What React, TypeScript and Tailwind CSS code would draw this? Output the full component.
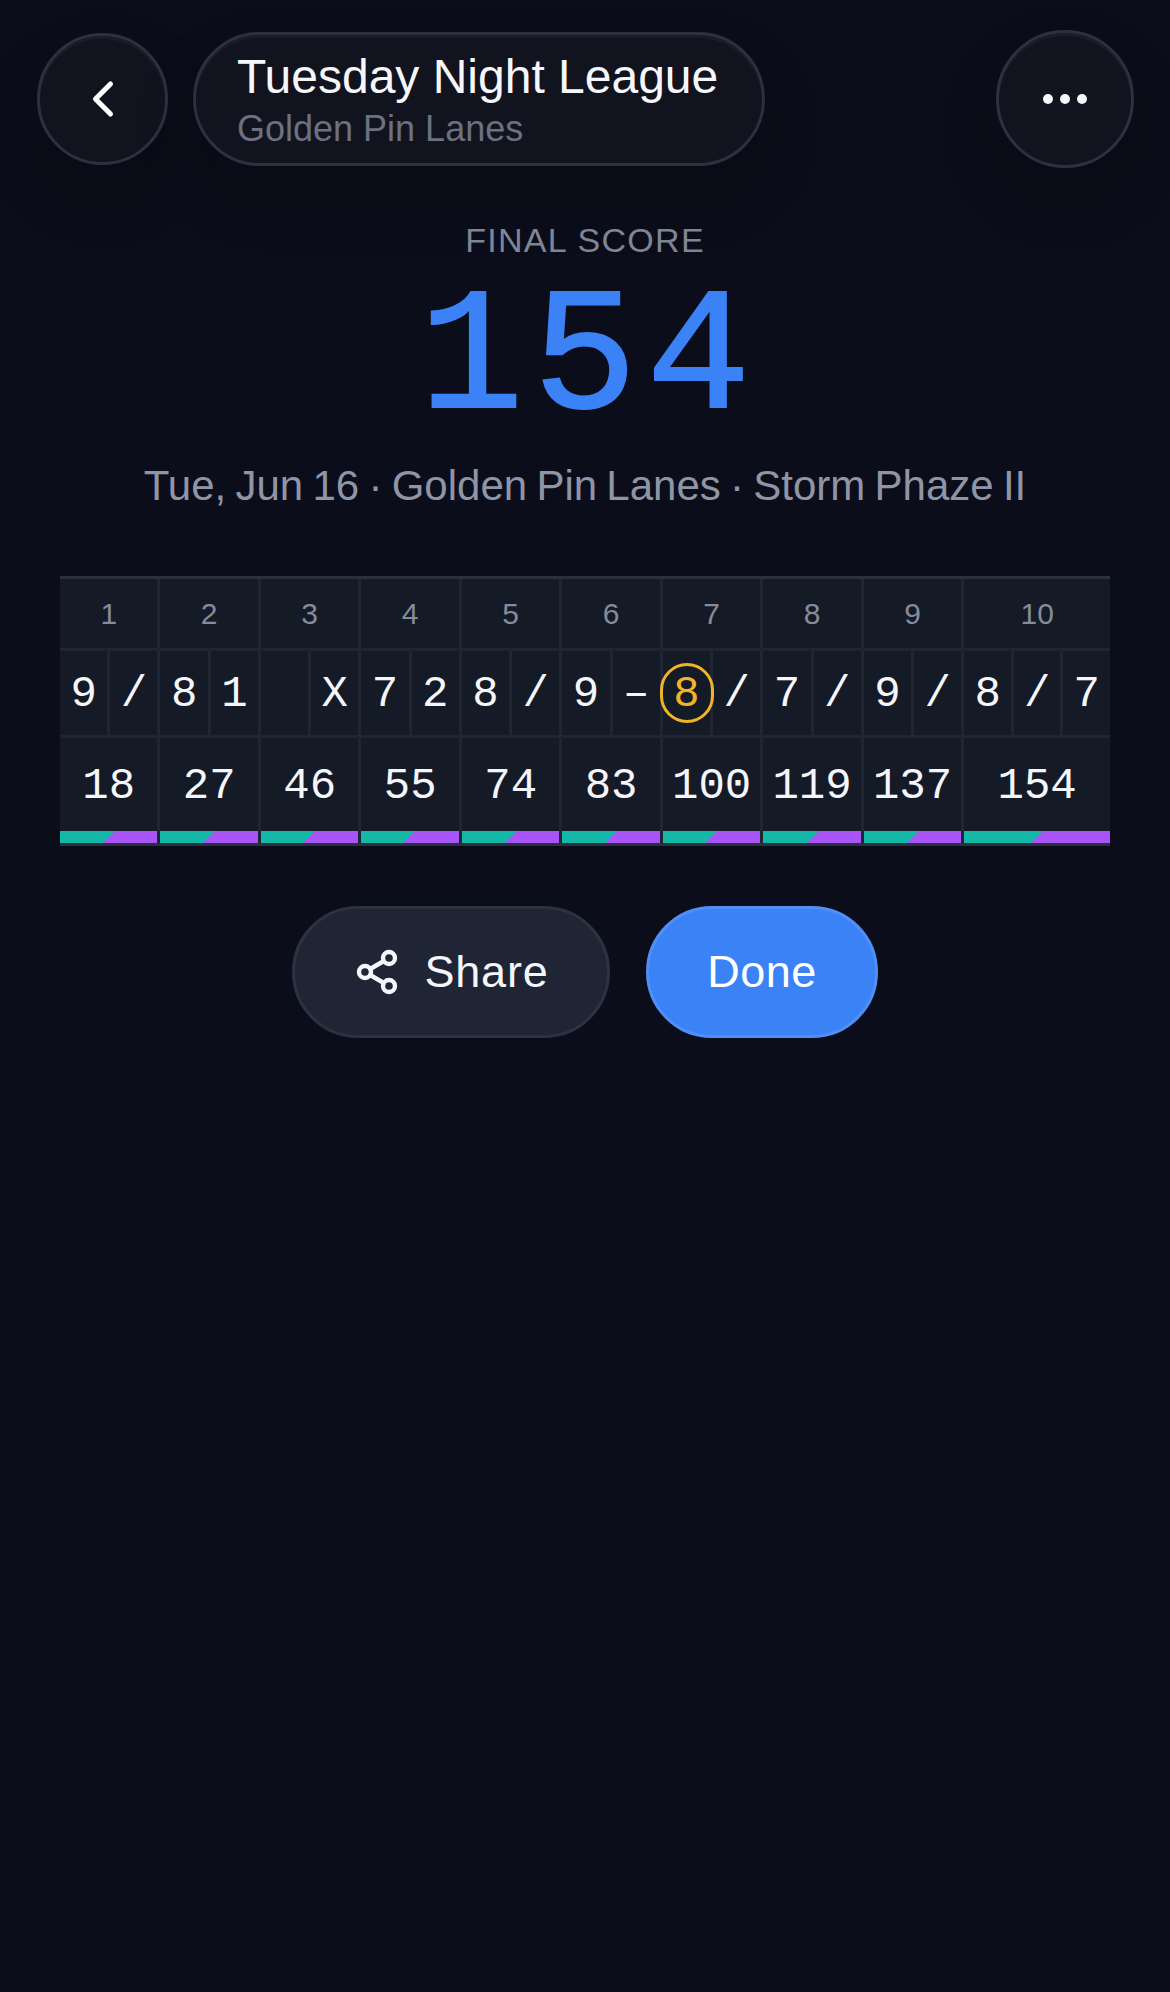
import React from "react";
import { ChevronLeft, Share2 } from "lucide-react";

type F = { n: number; balls: string[]; total: number };
const frames: F[] = [
  { n: 1, balls: ["9", "/"], total: 18 },
  { n: 2, balls: ["8", "1"], total: 27 },
  { n: 3, balls: ["", "X"], total: 46 },
  { n: 4, balls: ["7", "2"], total: 55 },
  { n: 5, balls: ["8", "/"], total: 74 },
  { n: 6, balls: ["9", "–"], total: 83 },
  { n: 7, balls: ["8", "/"], total: 100 },
  { n: 8, balls: ["7", "/"], total: 119 },
  { n: 9, balls: ["9", "/"], total: 137 },
  { n: 10, balls: ["8", "/", "7"], total: 154 },
];

const mono = "font-['Liberation_Mono',monospace]";

function Frame({ f }: { f: F }) {
  const last = f.n === 10;
  return (
    <div className={`flex flex-col min-w-0 ${last ? "" : "border-r-[3px] border-[#1f2533]"}`}>
      <div className="h-[69px] flex items-center justify-center text-[30px] text-[#858b9b] bg-[#141a26] border-b-[3px] border-[#1f2533] box-content">
        {f.n}
      </div>
      <div className="h-[84px] flex border-b-[3px] border-[#1f2533] box-content bg-[#141a26]">
        {f.balls.map((b, i) => (
          <div
            key={i}
            className={`relative flex-1 min-w-0 flex items-center justify-center pt-[2px] text-[44px] ${mono} ${
              i < f.balls.length - 1 ? "border-r-[3px] border-[#1f2533]" : ""
            } ${f.n === 7 && i === 0 ? "text-[#f0b429]" : "text-[#f4f6fb]"}`}
          >
            {b}
            {f.n === 7 && i === 0 && (
              <span className="absolute left-[-3px] top-[12px] w-[54px] h-[60px] rounded-full border-[3px] border-[#f0b429]" />
            )}
          </div>
        ))}
      </div>
      <div className={`h-[93px] flex items-center justify-center pt-[2px] text-[44px] text-[#f4f6fb] bg-[#141a26] ${mono}`}>
        {f.total}
      </div>
      <div className="h-[12px] bg-[linear-gradient(135deg,#14b8a6_50%,#a855f7_50%)]" />
    </div>
  );
}

export default function App() {
  return (
    <div className="min-h-[1992px] bg-[#0b0e1a] text-white font-['Liberation_Sans',sans-serif] overflow-hidden">
      <header className="flex items-center justify-between pl-[37px] pr-[36px] pt-[30px]">
        <div className="flex items-center gap-[25px]">
          <button className="w-[131px] h-[132px] rounded-full bg-[#11141f] border-[3px] border-[#2c3140] shadow-[0_30px_60px_rgba(0,0,0,0.2),inset_0_3px_0_rgba(255,255,255,0.04)] flex items-center justify-center">
            <ChevronLeft size={60} strokeWidth={2} className="text-white" />
          </button>
          <div className="w-[572px] h-[134px] rounded-full bg-[#11141f] border-[3px] border-[#2c3140] shadow-[0_30px_60px_rgba(0,0,0,0.2),inset_0_3px_0_rgba(255,255,255,0.04)] pl-[41px] pt-[15px] flex flex-col">
            <div className="text-[48px] leading-[54px] text-[#f6f7fb]">Tuesday Night League</div>
            <div className="text-[36px] leading-[42px] mt-[4px] text-[#6b7180]">Golden Pin Lanes</div>
          </div>
        </div>
        <button className="w-[138px] h-[138px] rounded-full bg-[#11141f] border-[3px] border-[#2c3140] shadow-[0_30px_60px_rgba(0,0,0,0.2),inset_0_3px_0_rgba(255,255,255,0.04)] flex items-center justify-center gap-[7px]">
          <span className="w-[10px] h-[10px] rounded-full bg-[#f6f7fb]" />
          <span className="w-[10px] h-[10px] rounded-full bg-[#f6f7fb]" />
          <span className="w-[10px] h-[10px] rounded-full bg-[#f6f7fb]" />
        </button>
      </header>

      <section className="flex flex-col items-center mt-[52px]">
        <div className="text-[34px] leading-[40px] tracking-[1.3px] text-[#7f8595]">FINAL SCORE</div>
        <div className={`text-[174px] leading-[188px] mt-[7px] pl-[9px] tracking-[9px] text-[#3b82f6] [-webkit-text-stroke:2px_#3b82f6] ${mono}`}>154</div>
        <div className="text-[42px] leading-[48px] mt-[7px] [word-spacing:-2.4px] text-[#8f95a6]">
          Tue, Jun 16 · Golden Pin Lanes · Storm Phaze II
        </div>
      </section>

      <section className="mx-[60px] mt-[66px] border-t-[3px] border-b-[3px] border-[#2a303d] grid grid-cols-[repeat(9,minmax(0,1fr))_minmax(0,1.45fr)]">
        {frames.map((f) => (
          <Frame key={f.n} f={f} />
        ))}
      </section>

      <section className="flex justify-center gap-[36px] mt-[60px]">
        <button className="w-[318px] h-[132px] rounded-full bg-[#1f2535] border-[3px] border-[#2c3240] flex items-center justify-center gap-[23px] text-[45px] tracking-[0.8px] text-[#f4f6fb]">
          <Share2 size={48} strokeWidth={2.2} />
          <span>Share</span>
        </button>
        <button className="w-[232px] h-[132px] rounded-full bg-[#3b82f6] border-[3px] border-[#4f8ff7] flex items-center justify-center text-[45px] tracking-[0.5px] text-white">
          Done
        </button>
      </section>
    </div>
  );
}
